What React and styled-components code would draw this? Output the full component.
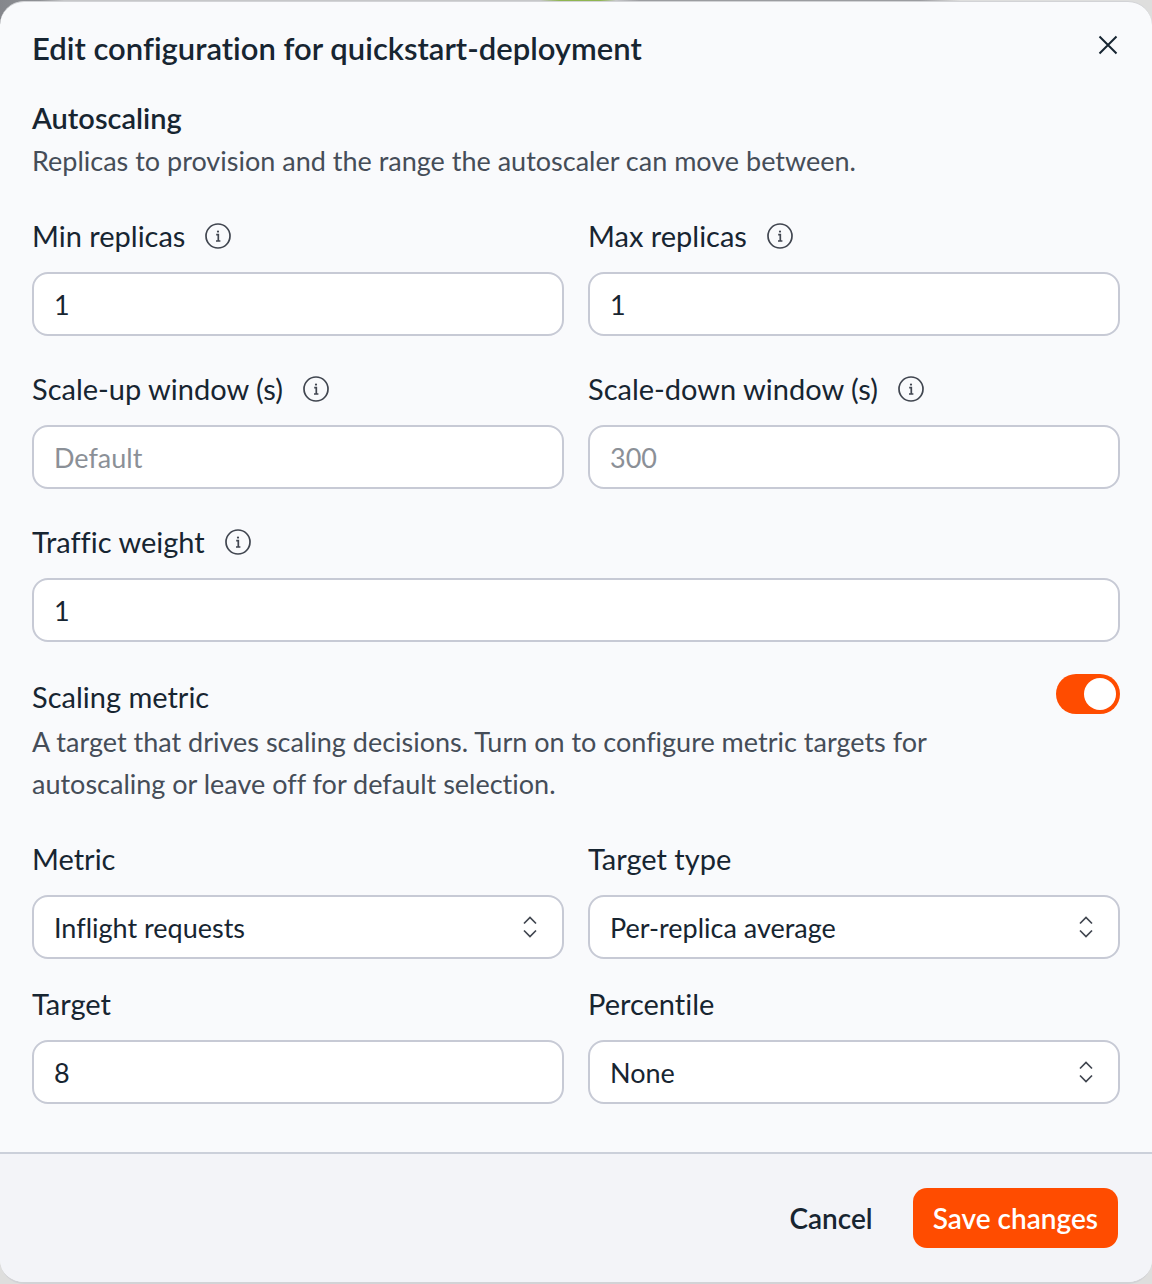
import React, { useState } from 'react';
import styled, { createGlobalStyle } from 'styled-components';

const GlobalStyle = createGlobalStyle`
  * {
    box-sizing: border-box;
  }
  body {
    margin: 0;
    background-color: #dededd;
    background-image: linear-gradient(90deg, #85878c 0, #8f9195 40px, #c6c7c9 64px, #c6c7c9 540px, #8fb550 560px, #8fb550 600px, #c6c7c9 616px, #9b9ca0 640px, #9b9ca0 920px, #dededd 960px);
    background-size: 100% 24px;
    background-repeat: no-repeat;
    color: #172531;
    font-family: Lato, "Liberation Sans", sans-serif;
    font-variant-ligatures: none;
  }
  button, input, select {
    font-family: inherit;
    font-variant-ligatures: inherit;
    color: inherit;
  }
`

const Dialog = styled.form`
  display: flex;
  flex-direction: column;
  min-height: calc(100vh - 1px);
  margin-top: 1px;
  overflow: hidden;
  background-color: #f9fafc;
  border-top: 1px solid #d2d3d6;
  border-bottom: 2px solid #d2d3d6;
  border-radius: 24px;
`

const DialogHeader = styled.header`
  display: flex;
  justify-content: space-between;
  align-items: flex-start;
  padding: 26px 32px 0;
`

const DialogTitle = styled.h1`
  margin: 0;
  font-size: 31px;
  font-weight: 600;
  line-height: 40px;
`

const CloseButton = styled.button`
  display: flex;
  padding: 5px 0;
  border: 0;
  background-color: transparent;
  cursor: pointer;
`

const DialogBody = styled.div`
  flex: 1;
  padding: 28px 32px 48px;
`

const SectionTitle = styled.h2`
  margin: 0;
  font-size: 29px;
  font-weight: 600;
  line-height: 44px;
`

const Description = styled.p`
  max-width: 920px;
  margin: 0;
  font-size: 27px;
  line-height: 42px;
  color: #454d58;
`

const FieldGrid = styled.div`
  display: grid;
  grid-template-columns: 1fr 1fr;
  gap: ${props => props.$rowGap} 24px;
  margin-top: 33px;
`

const FieldContainer = styled.div`
  display: flex;
  flex-direction: column;
  gap: 16px;
  grid-column: ${props => props.$wide ? "1 / -1" : "auto"};
`

const LabelRow = styled.div`
  display: flex;
  align-items: center;
  gap: 20px;
  height: 41px;
`

const FieldLabel = styled.label`
  font-size: 29px;
  line-height: 40px;
`

const InfoButton = styled.button`
  display: flex;
  padding: 0;
  border: 0;
  background-color: transparent;
`

const TextInput = styled.input`
  width: 100%;
  height: 64px;
  padding: 0 20px;
  border: 2px solid #c7cad5;
  border-radius: 16px;
  background-color: #ffffff;
  font-size: 27px;
  &::placeholder {
    color: #8b9097;
    opacity: 1;
  }
`

const SelectContainer = styled.div`
  display: grid;
  align-items: center;
  & > * {
    grid-area: 1 / 1;
  }
  & > svg {
    justify-self: end;
    margin-right: 24px;
    pointer-events: none;
  }
`

const SelectInput = styled.select`
  appearance: none;
  width: 100%;
  height: 64px;
  padding: 0 60px 0 20px;
  border: 2px solid #c7cad5;
  border-radius: 16px;
  background-color: #ffffff;
  font-size: 27px;
`

const MetricHeader = styled.div`
  display: flex;
  justify-content: space-between;
  align-items: flex-start;
  margin-top: 32px;
`

const MetricLabel = styled.label`
  display: block;
  margin: 2px 0 3px;
  font-size: 29px;
  line-height: 42px;
`

const Toggle = styled.input`
  appearance: none;
  flex-shrink: 0;
  display: flex;
  align-items: center;
  width: 64px;
  height: 40px;
  margin: 0;
  padding: 0 4px;
  border-radius: 20px;
  background-color: #c7cad5;
  cursor: pointer;
  &::before {
    content: "";
    width: 32px;
    height: 32px;
    border-radius: 50%;
    background-color: #ffffff;
  }
  &:checked {
    justify-content: flex-end;
    background-color: #ff4c00;
  }
`

const DialogFooter = styled.footer`
  display: flex;
  justify-content: flex-end;
  align-items: center;
  gap: 20px;
  padding: 34px;
  border-top: 2px solid #cbd0da;
  background-color: #f3f4f8;
`

const FooterButton = styled.button`
  height: 60px;
  padding: 0 20px;
  border: 0;
  border-radius: 14px;
  background-color: ${props => props.$primary ? "#ff4c00" : "transparent"};
  color: ${props => props.$primary ? "#ffffff" : "#172531"};
  font-size: 28px;
  font-weight: 600;
  cursor: pointer;
`

function InfoIcon() {
  return (
    <svg width="26" height="26" viewBox="0 0 26 26" fill="none" stroke="#414650" strokeWidth="1.7">
      <circle cx="13" cy="13" r="12" />
      <path d="M11.2 11.6H13.3V18M11 18H15.4" />
      <circle cx="13" cy="8.6" r="1.1" fill="#414650" stroke="none" />
    </svg>
  )
}

function ChevronsIcon() {
  return (
    <svg width="20" height="24" viewBox="0 0 20 24" fill="none" stroke="#414650" strokeWidth="1.7">
      <path d="M4 8.5L10 2.5L16 8.5M4 15.5L10 21.5L16 15.5" />
    </svg>
  )
}

function Field({id, label, info, wide, children}) {
  return (
    <FieldContainer $wide={wide}>
      <LabelRow>
        <FieldLabel htmlFor={id}>{label}</FieldLabel>
        {info && <InfoButton type="button" aria-label={"About " + label}><InfoIcon /></InfoButton>}
      </LabelRow>
      {children}
    </FieldContainer>
  )
}

function Select({id, options}) {
  return (
    <SelectContainer>
      <SelectInput id={id}>
        {options.map(option => <option key={option}>{option}</option>)}
      </SelectInput>
      <ChevronsIcon />
    </SelectContainer>
  )
}

function App() {

  const [metricEnabled, setMetricEnabled] = useState(true);

  return (
    <>
      <GlobalStyle />
      <Dialog role="dialog" aria-labelledby="dialog-title" onSubmit={e => e.preventDefault()}>
        <DialogHeader>
          <DialogTitle id="dialog-title">Edit configuration for quickstart-deployment</DialogTitle>
          <CloseButton type="button" aria-label="Close">
            <svg width="24" height="24" viewBox="0 0 24 24" fill="none" stroke="#172531" strokeWidth="2">
              <path d="M3.5 3.5L20.5 20.5M20.5 3.5L3.5 20.5" />
            </svg>
          </CloseButton>
        </DialogHeader>

        <DialogBody>
          <SectionTitle>Autoscaling</SectionTitle>
          <Description>Replicas to provision and the range the autoscaler can move between.</Description>

          <FieldGrid $rowGap="32px">
            <Field id="min-replicas" label="Min replicas" info>
              <TextInput id="min-replicas" defaultValue="1" />
            </Field>
            <Field id="max-replicas" label="Max replicas" info>
              <TextInput id="max-replicas" defaultValue="1" />
            </Field>
            <Field id="scale-up" label="Scale-up window (s)" info>
              <TextInput id="scale-up" placeholder="Default" />
            </Field>
            <Field id="scale-down" label="Scale-down window (s)" info>
              <TextInput id="scale-down" placeholder="300" />
            </Field>
            <Field id="traffic-weight" label="Traffic weight" info wide>
              <TextInput id="traffic-weight" defaultValue="1" />
            </Field>
          </FieldGrid>

          <MetricHeader>
            <div>
              <MetricLabel htmlFor="scaling-metric">Scaling metric</MetricLabel>
              <Description>A target that drives scaling decisions. Turn on to configure metric targets for autoscaling or leave off for default selection.</Description>
            </div>
            <Toggle
              id="scaling-metric"
              type="checkbox"
              role="switch"
              checked={metricEnabled}
              onChange={e => setMetricEnabled(e.target.checked)}
            />
          </MetricHeader>

          {metricEnabled && <FieldGrid $rowGap="24px">
            <Field id="metric" label="Metric">
              <Select id="metric" options={["Inflight requests"]} />
            </Field>
            <Field id="target-type" label="Target type">
              <Select id="target-type" options={["Per-replica average"]} />
            </Field>
            <Field id="target" label="Target">
              <TextInput id="target" defaultValue="8" />
            </Field>
            <Field id="percentile" label="Percentile">
              <Select id="percentile" options={["None"]} />
            </Field>
          </FieldGrid>}
        </DialogBody>

        <DialogFooter>
          <FooterButton type="button">Cancel</FooterButton>
          <FooterButton type="submit" $primary>Save changes</FooterButton>
        </DialogFooter>
      </Dialog>
    </>
  )
}

export default App
